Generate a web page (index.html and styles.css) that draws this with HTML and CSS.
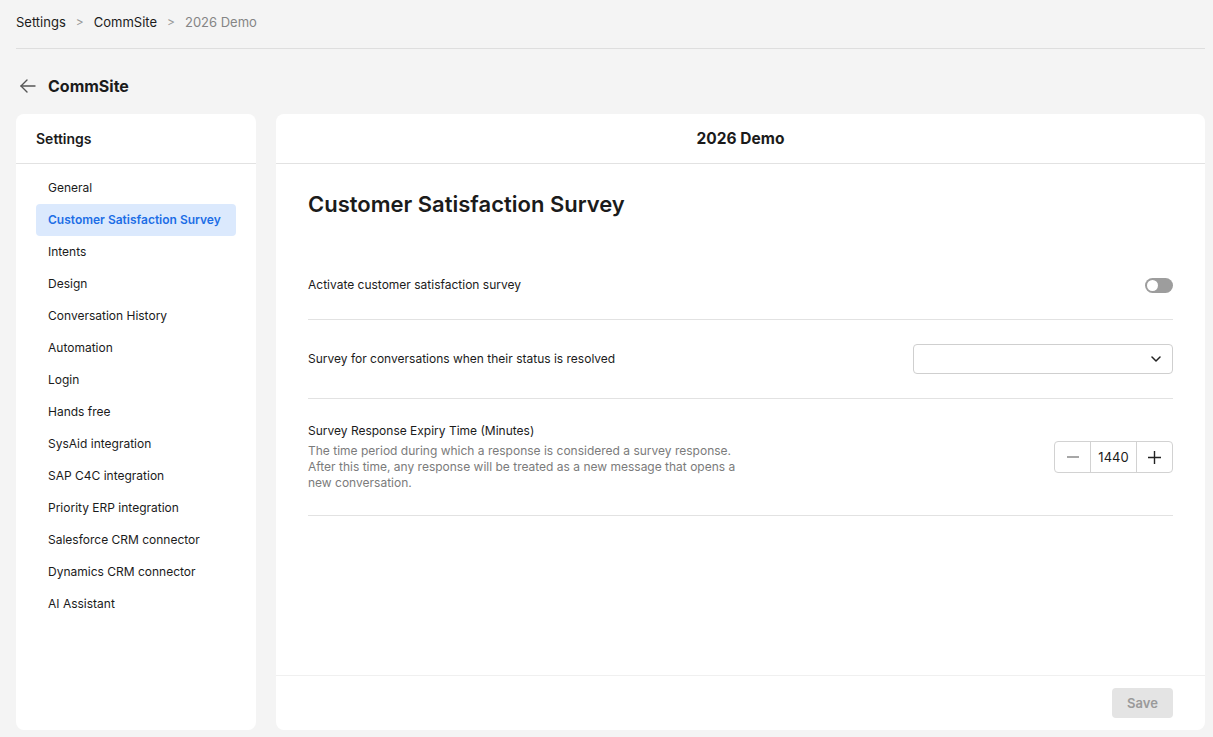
FILE: index.html
```html
<!DOCTYPE html>
<html>
<head>
	<title>CommSite - Settings</title>
	<link rel="stylesheet" href="styles.css">
</head>
<body>
	<div class="page">
		<div class="crumbs">
			<span class="crumb">Settings</span>
			<span class="crumb-sep">&gt;</span>
			<span class="crumb">CommSite</span>
			<span class="crumb-sep">&gt;</span>
			<span class="crumb current">2026 Demo</span>
		</div>

		<div class="title-row">
			<svg class="back" width="18" height="18" viewBox="0 0 18 18" fill="none" stroke="#555" stroke-width="1.4" stroke-linecap="round" stroke-linejoin="round">
				<path d="M16 9H2"/>
				<path d="M8 3L2 9l6 6"/>
			</svg>
			<h1>CommSite</h1>
		</div>

		<div class="columns">
			<div class="card sidebar">
				<div class="card-head left">Settings</div>
				<ul class="menu">
					<li>General</li>
					<li class="active">Customer Satisfaction Survey</li>
					<li>Intents</li>
					<li>Design</li>
					<li>Conversation History</li>
					<li>Automation</li>
					<li>Login</li>
					<li>Hands free</li>
					<li>SysAid integration</li>
					<li>SAP C4C integration</li>
					<li>Priority ERP integration</li>
					<li>Salesforce CRM connector</li>
					<li>Dynamics CRM connector</li>
					<li>AI Assistant</li>
				</ul>
			</div>

			<div class="card main">
				<div class="card-head">2026 Demo</div>
				<div class="content">
					<h2>Customer Satisfaction Survey</h2>

					<div class="row">
						<div class="label">Activate customer satisfaction survey</div>
						<div class="toggle"><span class="knob"></span></div>
					</div>

					<div class="row">
						<div class="label">Survey for conversations when their status is resolved</div>
						<div class="select">
							<svg width="10" height="6" viewBox="0 0 10 6" fill="none" stroke="#222" stroke-width="1.5" stroke-linecap="round" stroke-linejoin="round">
								<path d="M1 1l4 4 4-4"/>
							</svg>
						</div>
					</div>

					<div class="row">
						<div class="text">
							<div class="label">Survey Response Expiry Time (Minutes)</div>
							<div class="desc">The time period during which a response is considered a survey response. After this time, any response will be treated as a new message that opens a new conversation.</div>
						</div>
						<div class="stepper">
							<span class="step minus">
								<svg width="12" height="12" viewBox="0 0 12 12" stroke="#777" stroke-width="1.3"><path d="M0 6h12"/></svg>
							</span>
							<span class="value">1440</span>
							<span class="step plus">
								<svg width="13" height="13" viewBox="0 0 13 13" stroke="#222" stroke-width="1.4"><path d="M0 6.5h13M6.5 0v13"/></svg>
							</span>
						</div>
					</div>
				</div>
				<div class="footer">
					<button class="save">Save</button>
				</div>
			</div>
		</div>
	</div>
</body>
</html>
```

FILE: styles.css
```css
* {
	box-sizing: border-box;
}
html, body {
	margin: 0;
	height: 100%;
}
body {
	background-color: #f4f4f4;
	font-family: "Inter", "Noto Sans", sans-serif;
	color: #1b1b1b;
	font-size: 12px;
}
.page {
	height: 100%;
	padding: 0 8px 7px 16px;
	display: flex;
	flex-direction: column;
}

/* breadcrumbs */
.crumbs {
	display: flex;
	align-items: center;
	gap: 10px;
	height: 49px;
	padding-bottom: 5px;
	border-bottom: 1px solid #dedede;
	font-size: 13px;
	line-height: 16px;
}
.crumb {
	color: #1b1b1b;
}
.crumb.current {
	color: #858585;
}
.crumb-sep {
	color: #999;
	font-size: 12px;
}

.title-row {
	display: flex;
	align-items: center;
	gap: 11px;
	height: 32px;
	margin: 21px 0 12px;
	padding-left: 3px;
}
.title-row h1 {
	margin: 0;
	font-size: 16px;
	font-weight: 700;
}

.columns {
	flex: 1;
	display: flex;
	gap: 20px;
	min-height: 0;
}
.card {
	background-color: #fff;
	border-radius: 8px;
	display: flex;
	flex-direction: column;
}
.card-head {
	height: 50px;
	border-bottom: 1px solid #e2e2e2;
	display: flex;
	align-items: center;
	justify-content: center;
	font-size: 15.5px;
	font-weight: 700;
}
.card-head.left {
	justify-content: flex-start;
	padding-left: 20px;
	font-size: 14px;
	font-weight: 600;
}

/* sidebar */
.sidebar {
	width: 240px;
}
.menu {
	list-style: none;
	margin: 0;
	padding: 8px 20px;
}
.menu li {
	height: 32px;
	line-height: 32px;
	padding-left: 12px;
	border-radius: 4px;
	white-space: nowrap;
}
.menu li.active {
	background-color: #dbe9fd;
	color: #1d6ee6;
	font-weight: 600;
}

/* main */
.main {
	flex: 1;
}
.content {
	flex: 1;
	padding: 26px 32px 0;
}
.content h2 {
	margin: 0 0 33px;
	font-size: 22px;
	line-height: 28px;
	font-weight: 600;
}
.row {
	display: flex;
	align-items: center;
	justify-content: space-between;
	padding: 24px 0;
	border-bottom: 1px solid #e2e2e2;
	line-height: 20px;
}
.row .text .label {
	line-height: 16px;
	margin-bottom: 4px;
}
.desc {
	width: 440px;
	font-size: 12px;
	line-height: 16px;
	color: #7b7b7b;
}

.toggle {
	width: 28px;
	height: 15px;
	border-radius: 8px;
	background-color: #9d9d9d;
	position: relative;
}
.knob {
	position: absolute;
	left: 2px;
	top: 2px;
	width: 11px;
	height: 11px;
	border-radius: 50%;
	background-color: #fff;
}

.select {
	width: 260px;
	height: 30px;
	border: 1px solid #cfcfcf;
	border-radius: 4px;
	display: flex;
	align-items: center;
	justify-content: flex-end;
	padding-right: 11px;
}

.stepper {
	display: flex;
	height: 32px;
	border: 1px solid #d2d2d2;
	border-radius: 4px;
}
.step {
	width: 35px;
	display: flex;
	align-items: center;
	justify-content: center;
}
.value {
	width: 47px;
	border-left: 1px solid #d2d2d2;
	border-right: 1px solid #d2d2d2;
	display: flex;
	align-items: center;
	justify-content: center;
	font-size: 13px;
}

.footer {
	height: 55px;
	border-top: 1px solid #f0f0f0;
	display: flex;
	align-items: flex-start;
	justify-content: flex-end;
	padding: 12px 32px 0;
}
.save {
	width: 61px;
	height: 30px;
	border: none;
	border-radius: 4px;
	background-color: #e4e4e4;
	color: #9a9a9a;
	font-family: inherit;
	font-size: 13px;
	font-weight: 600;
}
```
